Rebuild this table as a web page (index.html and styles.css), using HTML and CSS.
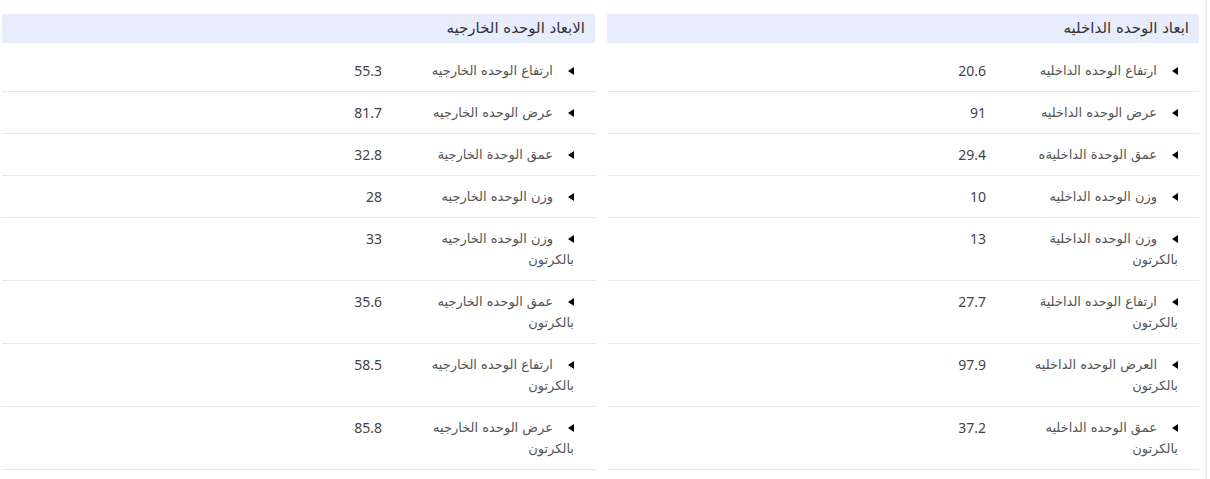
FILE: index.html
```html
<!DOCTYPE html>
<html lang="ar" dir="rtl">
<head>
<meta charset="utf-8">
<link rel="stylesheet" href="styles.css">
</head>
<body>
<div class="page">
  <section class="panel">
    <h2 class="panel-title">ابعاد الوحده الداخليه</h2>
    <ul class="rows">
      <li class="row"><span class="label"><i class="arrow"></i>ارتفاع الوحده الداخليه</span><span class="value">20.6</span></li>
      <li class="row"><span class="label"><i class="arrow"></i>عرض الوحده الداخليه</span><span class="value">91</span></li>
      <li class="row"><span class="label"><i class="arrow"></i>عمق الوحدة الداخليةه</span><span class="value">29.4</span></li>
      <li class="row"><span class="label"><i class="arrow"></i>وزن الوحده الداخليه</span><span class="value">10</span></li>
      <li class="row"><span class="label"><i class="arrow"></i>وزن الوحده الداخلية بالكرتون</span><span class="value">13</span></li>
      <li class="row"><span class="label"><i class="arrow"></i>ارتفاع الوحده الداخلية بالكرتون</span><span class="value">27.7</span></li>
      <li class="row"><span class="label"><i class="arrow"></i>العرض الوحده الداخليه بالكرتون</span><span class="value">97.9</span></li>
      <li class="row"><span class="label"><i class="arrow"></i>عمق الوحده الداخليه بالكرتون</span><span class="value">37.2</span></li>
    </ul>
  </section>
  <section class="panel">
    <h2 class="panel-title">الابعاد الوحده الخارجيه</h2>
    <ul class="rows">
      <li class="row"><span class="label"><i class="arrow"></i>ارتفاع الوحده الخارجيه</span><span class="value">55.3</span></li>
      <li class="row"><span class="label"><i class="arrow"></i>عرض الوحده الخارجيه</span><span class="value">81.7</span></li>
      <li class="row"><span class="label"><i class="arrow"></i>عمق الوحدة الخارجية</span><span class="value">32.8</span></li>
      <li class="row"><span class="label"><i class="arrow"></i>وزن الوحده الخارجيه</span><span class="value">28</span></li>
      <li class="row"><span class="label"><i class="arrow"></i>وزن الوحده الخارجيه بالكرتون</span><span class="value">33</span></li>
      <li class="row"><span class="label"><i class="arrow"></i>عمق الوحده الخارجيه بالكرتون</span><span class="value">35.6</span></li>
      <li class="row"><span class="label"><i class="arrow"></i>ارتفاع الوحده الخارجيه بالكرتون</span><span class="value">58.5</span></li>
      <li class="row"><span class="label"><i class="arrow"></i>عرض الوحده الخارجيه بالكرتون</span><span class="value">85.8</span></li>
    </ul>
  </section>
</div>
</body>
</html>
```

FILE: styles.css
```css
html, body {
  margin: 0;
  padding: 0;
  background: #fff;
}
body {
  font-family: "Noto Sans", "DejaVu Sans", sans-serif;
  color: #555;
  font-size: 14px;
}
.page {
  margin-right: 3px;
  box-sizing: border-box;
  padding: 14px 6px 0 2px;
  border-right: 2px solid #ececec;
  display: flex;
  gap: 12px;
  min-height: 479px;
}
.panel {
  flex: 0 0 592px;
}
.panel:last-child {
  flex-basis: 593px;
}
.panel-title {
  margin: 0;
  height: 29px;
  line-height: 29px;
  background: #e8edfd;
  color: #333;
  font-family: "DejaVu Sans", sans-serif;
  font-size: 15px;
  font-weight: normal;
  padding: 0 10px;
}
.rows {
  list-style: none;
  margin: 0;
  padding: 7px 0 0;
}
.row {
  display: flex;
  align-items: flex-start;
  padding: 10px 21px 10px 0;
  line-height: 21px;
  border-bottom: 1px solid #e8e8e8;
}
.label {
  flex: 0 0 155px;
  color: #555;
  font-family: "DejaVu Sans", sans-serif;
  font-size: 13px;
}
.arrow {
  display: inline-block;
  width: 0;
  height: 0;
  border-top: 4.5px solid transparent;
  border-bottom: 4.5px solid transparent;
  border-right: 6px solid #000;
  margin-left: 15px;
  vertical-align: 0;
}
.value {
  padding-right: 37px;
  color: #444;
}
```
